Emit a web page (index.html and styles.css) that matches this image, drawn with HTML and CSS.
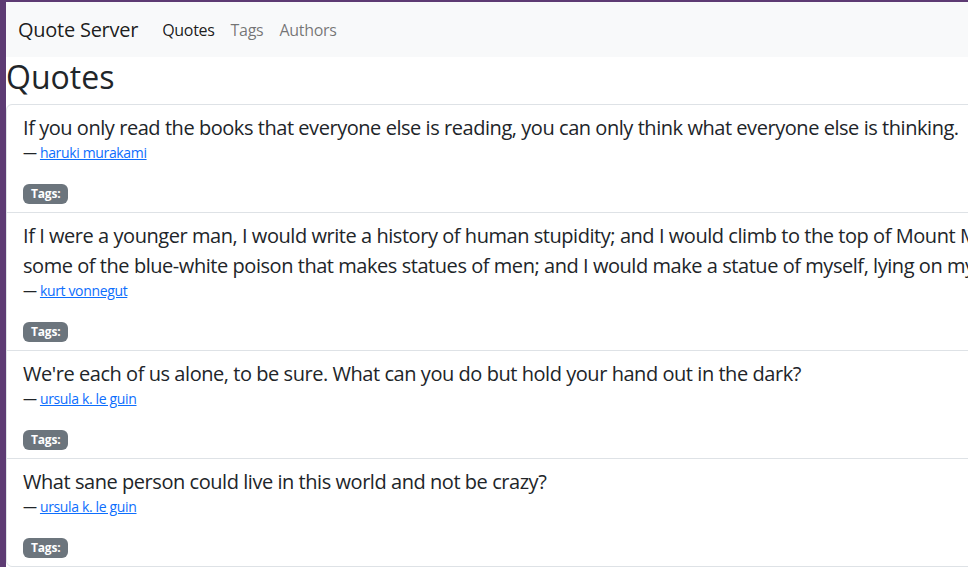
FILE: index.html
```html
<!DOCTYPE html>
<html lang="en">
<head>
<meta charset="utf-8">
<title>Quote Server</title>
<link rel="stylesheet" href="styles.css">
</head>
<body>
<div class="page">
  <nav class="navbar">
    <a class="brand" href="#">Quote Server</a>
    <ul class="nav">
      <li><a class="nav-link active" href="#">Quotes</a></li>
      <li><a class="nav-link" href="#">Tags</a></li>
      <li><a class="nav-link" href="#">Authors</a></li>
    </ul>
  </nav>
  <main class="content">
    <h1 class="title">Quotes</h1>
    <ul class="list">
      <li class="item">
        <blockquote class="quote">
          <p class="quote-text">If you only read the books that everyone else is reading, you can only think what everyone else is thinking.</p>
          <footer class="quote-footer"><a href="#">haruki murakami</a></footer>
        </blockquote>
        <div class="tags"><span class="badge">Tags:</span></div>
      </li>
      <li class="item">
        <blockquote class="quote">
          <p class="quote-text">If I were a younger man, I would write a history of human stupidity; and I would climb to the top of Mount McCabe and lie down on my back with my history for a pillow; and I would take from the ground<br>some of the blue-white poison that makes statues of men; and I would make a statue of myself, lying on my back, grinning horribly, and thumbing my nose at You Know Who.</p>
          <footer class="quote-footer"><a href="#">kurt vonnegut</a></footer>
        </blockquote>
        <div class="tags"><span class="badge">Tags:</span></div>
      </li>
      <li class="item">
        <blockquote class="quote">
          <p class="quote-text">We're each of us alone, to be sure. What can you do but hold your hand out in the dark?</p>
          <footer class="quote-footer"><a href="#">ursula k. le guin</a></footer>
        </blockquote>
        <div class="tags"><span class="badge">Tags:</span></div>
      </li>
      <li class="item">
        <blockquote class="quote">
          <p class="quote-text">What sane person could live in this world and not be crazy?</p>
          <footer class="quote-footer"><a href="#">ursula k. le guin</a></footer>
        </blockquote>
        <div class="tags"><span class="badge">Tags:</span></div>
      </li>
    </ul>
  </main>
</div>
</body>
</html>
```

FILE: styles.css
```css
html {
  overflow: hidden;
}
body {
  margin: 0;
  border-left: 6px solid #5d3b73;
  border-top: 2px solid #5d3b73;
  background: #fff;
  font-family: "Open Sans", "DejaVu Sans", sans-serif;
  font-size: 16px;
  line-height: 1.5;
  color: #212529;
}
.page {
  width: 1900px;
}
.navbar {
  display: flex;
  align-items: center;
  background: #f8f9fa;
  padding: 8px 12px;
  height: 55px;
  box-sizing: border-box;
}
.brand {
  font-size: 20px;
  line-height: 30px;
  letter-spacing: -0.25px;
  color: rgba(0, 0, 0, 0.9);
  text-decoration: none;
  margin-right: 16px;
}
.nav {
  display: flex;
  list-style: none;
  margin: 0;
  padding: 0;
}
.nav-link {
  display: block;
  padding: 8px;
  letter-spacing: -0.3px;
  color: rgba(0, 0, 0, 0.55);
  text-decoration: none;
}
.nav-link.active {
  color: rgba(0, 0, 0, 0.9);
}
.title {
  font-size: 32px;
  font-weight: 500;
  line-height: 1.2;
  margin: 0 0 8px 0;
  padding-top: 1px;
}
.list {
  list-style: none;
  margin: 0;
  padding: 0;
  border: 1px solid #dee2e6;
  border-radius: 6px;
}
.item {
  padding: 8px 16px;
  border-top: 1px solid #dee2e6;
}
.item:first-child {
  border-top: none;
}
.quote {
  margin: 0 0 16px 0;
}
.quote-text {
  font-size: 20px;
  line-height: 30px;
  letter-spacing: -0.45px;
  margin: 0;
  white-space: nowrap;
}
.quote-footer {
  font-size: 14px;
  line-height: 20px;
  letter-spacing: -0.35px;
  color: #212529;
  padding-bottom: 1px;
}
.quote-footer::before {
  content: "\2014\00A0";
}
.quote-footer a {
  color: #0d6efd;
}
.tags {
  line-height: 24px;
}
.badge {
  display: inline-block;
  padding: 4px 8px;
  font-size: 12px;
  font-weight: 700;
  line-height: 1;
  letter-spacing: -0.2px;
  color: #fff;
  background: #6c757d;
  border-radius: 6px;
  vertical-align: baseline;
}
```
